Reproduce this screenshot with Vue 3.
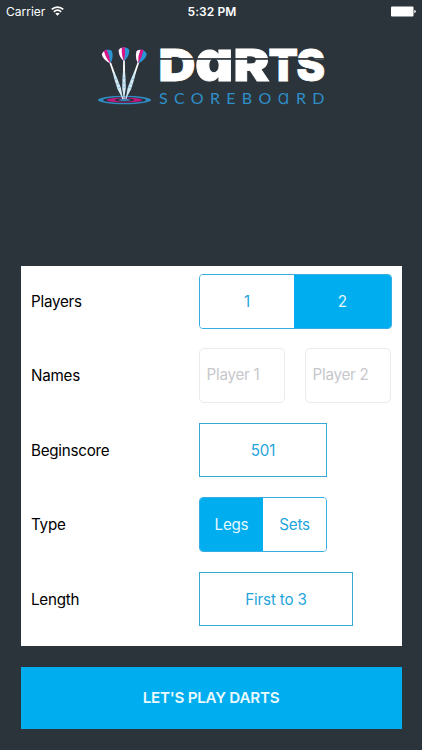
<template>
  <div class="screen">
    <header class="status">
      <div class="carrier">
        <span>Carrier</span>
        <svg class="wifi" viewBox="0 0 12 9">
          <path d="M.7 3.1C3.7.2 8.3.2 11.3 3.1" />
          <path d="M2.6 5.3C4.6 3.5 7.4 3.5 9.4 5.3" />
          <path class="dot" d="M6 8.8L4 6.8C5.1 5.8 6.9 5.8 8 6.8Z" />
        </svg>
      </div>
      <div class="time">5:32 PM</div>
      <div class="battery">
        <svg viewBox="0 0 25 11">
          <rect x="0" y="0.5" width="22.5" height="10" rx="1" />
          <path d="M23.3 3.8Q24.8 4.2 24.8 5.5T23.3 7.2Z" />
        </svg>
      </div>
    </header>

    <svg class="logo" viewBox="0 -16 236 90">
      <!-- board -->
      <ellipse cx="31.5" cy="60" rx="26.7" ry="4.2" fill="#2f8dc4" />
      <ellipse cx="31.5" cy="60" rx="21.5" ry="3" fill="#28313a" />
      <ellipse cx="31.5" cy="60" rx="17.5" ry="2.5" fill="#c0187c" />
      <ellipse cx="31.5" cy="60" rx="9.5" ry="1.8" fill="#28313a" />
      <ellipse cx="31.5" cy="60" rx="6" ry="1.2" fill="#3a83b5" />
      <!-- darts -->
      <g v-for="dart in darts" :key="dart.angle" :transform="`translate(${dart.x} 59) rotate(${dart.angle})`">
        <path :d="`M-.8 ${-dart.len + 12}L-1 -27H1L.8 ${-dart.len + 12}Z`" fill="#fff" />
        <path d="M-1 -28H1L1.5 -21 1.8 -11 .6 -3V0H-.6V-3L-1.8 -11-1.5 -21Z" fill="#d3eaf6" />
        <path d="M-1.3 -21H1.3M-1.4 -16H1.4M-1.4 -12H1.4" stroke="#79b8dc" stroke-width=".8" />
        <g :transform="`translate(0 ${-dart.len})`">
          <path d="M0 14C-3 11.5-5.3 8-5.3 3Q-4.6 1.2 0 0Q4.6 1.2 5.3 3C5.3 8 3 11.5 0 14Z" fill="#2b95d3" />
          <path d="M0 14C-3 11.5-5.3 8-5.3 3Q-4.6 1.2 0 0L.8.3Q1.8 7 0 14Z" fill="#d91484" />
          <path d="M0 14C-3 11.5-5.3 8-5.3 3Q-4.6 1.8-2.2.7Q-2.8 8 0 14Z" fill="#fff" />
        </g>
      </g>
      <text class="word" y="41"><tspan
        v-for="l in letters"
        :key="l.char"
        :class="{ round: l.char === 'a' }"
        :x="l.x"
        :textLength="l.width"
        lengthAdjust="spacingAndGlyphs"
      >{{ l.char }}</tspan></text>
      <rect x="66" y="18.1" width="168" height="1.7" fill="#2b343a" />
      <text class="sub" x="66" y="64" textLength="165.5">SCOREBO<tspan class="round">a</tspan>RD</text>
    </svg>

    <main class="card">
      <div class="row">
        <label>Players</label>
        <div class="segmented wide">
          <button
            v-for="n in [1, 2]"
            :key="n"
            :class="{ active: players === n }"
            @click="players = n"
          >{{ n }}</button>
        </div>
      </div>
      <div class="row">
        <label>Names</label>
        <div class="names">
          <input v-for="n in players" :key="n" v-model="names[n - 1]" type="text" :placeholder="`Player ${n}`" />
        </div>
      </div>
      <div class="row">
        <label>Beginscore</label>
        <button class="picker">{{ beginscore }}</button>
      </div>
      <div class="row">
        <label>Type</label>
        <div class="segmented">
          <button
            v-for="t in ['Legs', 'Sets']"
            :key="t"
            :class="{ active: type === t }"
            @click="type = t"
          >{{ t }}</button>
        </div>
      </div>
      <div class="row">
        <label>Length</label>
        <button class="picker length">First to {{ length }}</button>
      </div>
    </main>

    <button class="play">LET'S PLAY DARTS</button>
  </div>
</template>

<script setup>
import { ref } from 'vue';

// game settings
const players = ref(2);
const names = ref(['', '']);
const beginscore = ref(501);
const type = ref('Legs');
const length = ref(3);

// darts in the logo
const darts = [
  { x: 29.8, angle: -19, len: 52 },
  { x: 31, angle: 0, len: 52 },
  { x: 32.8, angle: 19, len: 52 },
];

const letters = [
  { char: 'D', x: 65.5, width: 37 },
  { char: 'a', x: 102, width: 38.5 },
  { char: 'R', x: 140.5, width: 36 },
  { char: 'T', x: 175.5, width: 29.5 },
  { char: 'S', x: 203.5, width: 28.5 },
];
</script>

<style>
body {
  margin: 0;
  background: #2b343a;
}
</style>

<style scoped>
.screen {
  box-sizing: border-box;
  width: 422px;
  height: 750px;
  padding: 0 20.5px;
  display: flex;
  flex-direction: column;
  background: #2b343a;
  color: #000;
  font-family: Inter, "Liberation Sans", sans-serif;
  font-size: 15.2px;
  letter-spacing: -0.25px;
}

button,
input {
  box-sizing: border-box;
  margin: 0;
  font: inherit;
  letter-spacing: inherit;
}

.status {
  display: grid;
  grid-template-columns: 1fr auto 1fr;
  align-items: center;
  height: 22px;
  margin: 0 -14.5px;
  color: #fff;
  font-size: 12px;
  letter-spacing: 0;
}

.carrier {
  display: flex;
  align-items: center;
  gap: 5.5px;
}

.wifi {
  width: 13px;
  height: 10px;
  margin-top: -1px;
  fill: none;
  stroke: #fff;
  stroke-width: 1.6;
}

.wifi .dot {
  fill: #fff;
  stroke: none;
}

.time {
  padding-left: 2px;
  font-weight: 600;
  letter-spacing: 0.1px;
}

.battery {
  display: flex;
  justify-content: flex-end;
}

.battery svg {
  width: 25px;
  height: 11px;
  fill: #fff;
}

.logo {
  flex: none;
  width: 236px;
  height: 90px;
  margin: 2px 0 0 72.5px;
}

.word {
  fill: #fff;
  stroke: #fff;
  stroke-width: 0.8;
  font-size: 43.5px;
  font-weight: 900;
  letter-spacing: 0;
}

.word .round {
  font-size: 56px;
}

.round {
  font-feature-settings: "cv11";
}

.sub {
  fill: #2e8fc9;
  font-family: Lato, sans-serif;
  font-size: 16px;
  letter-spacing: 0;
}

.sub .round {
  font-family: Inter, sans-serif;
  font-size: 20px;
  font-weight: 300;
}

.card {
  box-sizing: border-box;
  display: flex;
  flex-direction: column;
  gap: 19.5px;
  height: 380.5px;
  margin-top: 151.7px;
  padding: 8.3px 10px 0 10.5px;
  background: #fff;
}

.row {
  display: flex;
  flex: none;
  align-items: center;
  height: 55px;
}

.row label {
  width: 168px;
}

.segmented {
  box-sizing: border-box;
  display: flex;
  width: 128px;
  height: 55px;
  border: 1px solid #35ade0;
  border-radius: 4px;
  overflow: hidden;
}

.wide {
  width: 192.5px;
}

.segmented button {
  flex: 1;
  padding: 0;
  border: 0;
  background: #fff;
  color: #1fa5dc;
}

.wide button:first-child {
  flex: none;
  width: 94px;
}

.segmented .active {
  background: #00adef;
  color: #e4f8ff;
}

.names {
  display: flex;
  gap: 20px;
}

.names input {
  width: 86px;
  height: 55px;
  padding: 0 6.5px 2px;
  border: 1px solid #ebebed;
  border-radius: 5px;
  outline: 0;
}

.names input::placeholder {
  color: #c7c7cc;
  opacity: 1;
}

.picker {
  width: 128px;
  height: 54px;
  border: 1px solid #35a9d3;
  background: #fff;
  color: #1fa5dc;
  letter-spacing: -0.15px;
}

.length {
  width: 154px;
}

.play {
  height: 62.5px;
  margin-top: 20.5px;
  border: 0;
  background: #00adef;
  color: #e9faff;
  font-weight: 600;
}
</style>
